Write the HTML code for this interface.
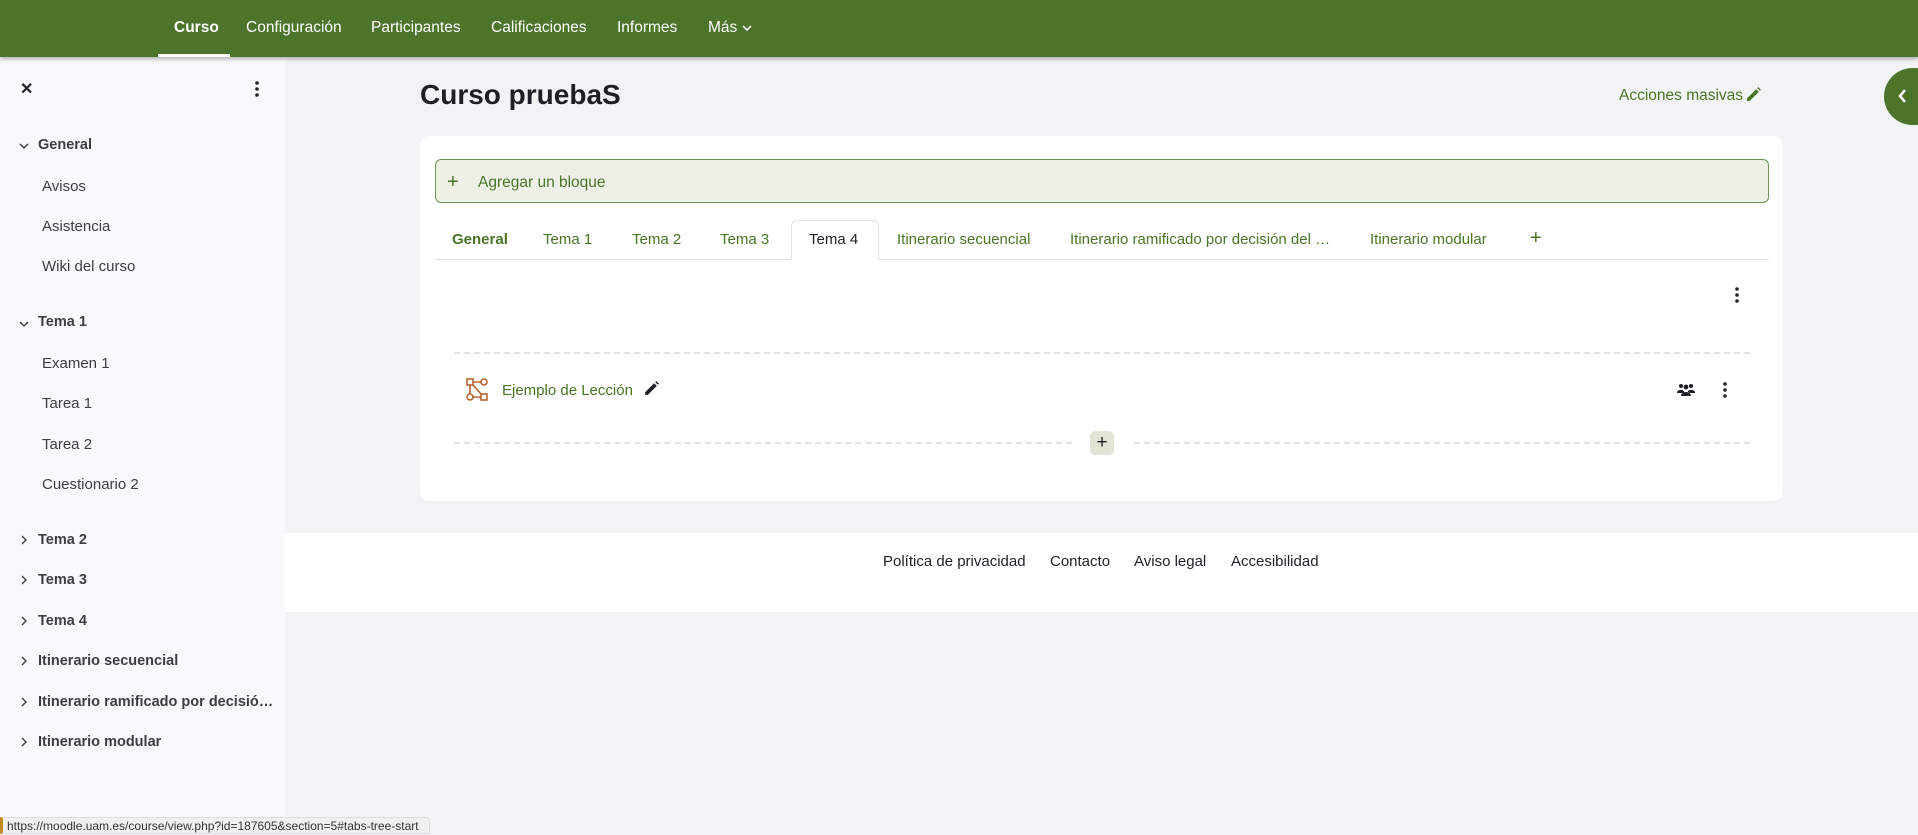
<!DOCTYPE html>
<html><head><meta charset="utf-8"><style>
*{box-sizing:border-box;margin:0;padding:0}
body{width:1918px;height:834px;overflow:hidden;background:#f2f3f5;font-family:"Liberation Sans",sans-serif;position:relative;color:#1d2125}
.a{position:absolute;white-space:nowrap}
.nav{position:absolute;left:0;top:0;width:1918px;height:57px;background:#4c742b;box-shadow:0 2px 4px rgba(0,0,0,.3);z-index:2}
.nav span{position:absolute;top:19px;color:#fff;font-size:15.5px}
.side{position:absolute;left:0;top:57px;width:285px;height:777px;background:#f8f9fa}
.side .s{position:absolute;left:38px;font-size:14.5px;font-weight:bold;color:#3a3f44}
.side .i{position:absolute;left:42px;font-size:15px;color:#3a3f44}
.g{color:#4a7426}
.tab{position:absolute;top:231px;font-size:15px;color:#4a7426}
.dash{position:absolute;height:0;border-top:2px dashed #dee2e6}
.ft{position:absolute;top:553px;font-size:15px;color:#1d2125}
</style></head><body>
<div class="nav">
<span style="left:174px;font-weight:bold">Curso</span>
<span style="left:246px">Configuración</span>
<span style="left:371px">Participantes</span>
<span style="left:491px">Calificaciones</span>
<span style="left:617px">Informes</span>
<span style="left:708px">Más <svg width="10" height="8" viewBox="0 0 10 8"><path d="M1 2l4 4 4-4" stroke="#fff" stroke-width="1.6" fill="none"/></svg></span>
<div style="position:absolute;left:158px;top:54px;width:72px;height:3px;background:#fff"></div>
</div>
<div class="side">
<div class="a" style="left:20px;top:22px;font-size:16px;font-weight:bold">✕</div>
<svg class="a" style="left:254px;top:24px" width="6" height="16"><circle cx="3" cy="2" r="1.8" fill="#222"/><circle cx="3" cy="8" r="1.8" fill="#222"/><circle cx="3" cy="14" r="1.8" fill="#222"/></svg>
<svg class="a" style="left:19px;top:85px" width="10" height="8"><path d="M1 2l4 4 4-4" stroke="#3a3f44" stroke-width="1.4" fill="none"/></svg>
<div class="s" style="top:80px">General</div>
<div class="i" style="top:121px">Avisos</div>
<div class="i" style="top:161px">Asistencia</div>
<div class="i" style="top:201px">Wiki del curso</div>
<svg class="a" style="left:19px;top:263px" width="10" height="8"><path d="M1 2l4 4 4-4" stroke="#3a3f44" stroke-width="1.4" fill="none"/></svg>
<div class="s" style="top:257px">Tema 1</div>
<div class="i" style="top:298px">Examen 1</div>
<div class="i" style="top:338px">Tarea 1</div>
<div class="i" style="top:379px">Tarea 2</div>
<div class="i" style="top:419px">Cuestionario 2</div>
<svg class="a" style="left:20px;top:478px" width="8" height="10"><path d="M2 1l4 4-4 4" stroke="#3a3f44" stroke-width="1.4" fill="none"/></svg>
<div class="s" style="top:475px">Tema 2</div>
<svg class="a" style="left:20px;top:518px" width="8" height="10"><path d="M2 1l4 4-4 4" stroke="#3a3f44" stroke-width="1.4" fill="none"/></svg>
<div class="s" style="top:515px">Tema 3</div>
<svg class="a" style="left:20px;top:559px" width="8" height="10"><path d="M2 1l4 4-4 4" stroke="#3a3f44" stroke-width="1.4" fill="none"/></svg>
<div class="s" style="top:556px">Tema 4</div>
<svg class="a" style="left:20px;top:599px" width="8" height="10"><path d="M2 1l4 4-4 4" stroke="#3a3f44" stroke-width="1.4" fill="none"/></svg>
<div class="s" style="top:596px">Itinerario secuencial</div>
<svg class="a" style="left:20px;top:640px" width="8" height="10"><path d="M2 1l4 4-4 4" stroke="#3a3f44" stroke-width="1.4" fill="none"/></svg>
<div class="s" style="top:637px">Itinerario ramificado por decisió…</div>
<svg class="a" style="left:20px;top:680px" width="8" height="10"><path d="M2 1l4 4-4 4" stroke="#3a3f44" stroke-width="1.4" fill="none"/></svg>
<div class="s" style="top:677px">Itinerario modular</div>
</div>
<div class="a" style="left:420px;top:79px;font-size:28px;font-weight:bold">Curso pruebaS</div>
<div class="a g" style="left:1619px;top:87px;font-size:15.5px">Acciones masivas</div>
<svg class="a" style="left:1745px;top:86px" width="17" height="17" viewBox="0 0 16 16"><path d="M2 11.5L10.5 3l2.5 2.5L4.5 14H2z M11.5 2l1-1 2.5 2.5-1 1z" fill="#4a7426"/></svg>
<div class="a" style="left:1884px;top:68px;width:60px;height:57px;border-radius:29px;background:#4c742b"></div>
<svg class="a" style="left:1897px;top:88px" width="10" height="16"><path d="M8 2L3 8l5 6" stroke="#fff" stroke-width="2.4" fill="none"/></svg>
<div class="a" style="left:420px;top:136px;width:1363px;height:365px;background:#fff;border-radius:10px"></div>
<div class="a" style="left:435px;top:159px;width:1334px;height:44px;background:#eef0e8;border:1px solid #6f9152;border-radius:6px"></div>
<div class="a g" style="left:447px;top:171px;font-size:20px">+</div>
<div class="a g" style="left:478px;top:174px;font-size:15.5px">Agregar un bloque</div>
<div class="a" style="left:435px;top:259px;width:1334px;height:1px;background:#dee2e6"></div>
<div class="a" style="left:791px;top:220px;width:88px;height:40px;background:#fff;border:1px solid #dee2e6;border-bottom:none;border-radius:6px 6px 0 0"></div>
<div class="tab" style="left:452px;font-weight:bold">General</div>
<div class="tab" style="left:543px">Tema 1</div>
<div class="tab" style="left:632px">Tema 2</div>
<div class="tab" style="left:720px">Tema 3</div>
<div class="tab" style="left:809px;color:#1d2125">Tema 4</div>
<div class="tab" style="left:897px">Itinerario secuencial</div>
<div class="tab" style="left:1070px">Itinerario ramificado por decisión del …</div>
<div class="tab" style="left:1370px">Itinerario modular</div>
<div class="tab" style="left:1530px;top:227px;font-size:20px">+</div>
<svg class="a" style="left:1734px;top:287px" width="6" height="16"><circle cx="3" cy="2" r="1.8" fill="#222"/><circle cx="3" cy="8" r="1.8" fill="#222"/><circle cx="3" cy="14" r="1.8" fill="#222"/></svg>
<div class="dash" style="left:454px;top:352px;width:1296px"></div>
<svg class="a" style="left:466px;top:378px" width="23" height="23" viewBox="0 0 23 23" fill="none" stroke="#b5652f" stroke-width="1.6"><rect x="1" y="1" width="6" height="6"/><circle cx="18" cy="4" r="3"/><circle cx="4" cy="19" r="3"/><rect x="15" y="16" width="6" height="6"/><path d="M7 4h8M4 7v9M7 19h8M7 7l8 9"/></svg>
<div class="a g" style="left:502px;top:382px;font-size:15px">Ejemplo de Lección</div>
<svg class="a" style="left:643px;top:380px" width="17" height="17" viewBox="0 0 16 16"><path d="M2 11.5L10.5 3l2.5 2.5L4.5 14H2z M11.5 2l1-1 2.5 2.5-1 1z" fill="#1d2125"/></svg>
<svg class="a" style="left:1677px;top:383px" width="18" height="13" viewBox="0 0 18 13" fill="#1d2125"><circle cx="4" cy="3" r="2"/><circle cx="14" cy="3" r="2"/><circle cx="9" cy="4" r="2.4"/><path d="M0 9a4 3 0 0 1 7-1v2H0z M18 9a4 3 0 0 0-7-1v2h7z M4 13a5 4 0 0 1 10 0z"/></svg>
<svg class="a" style="left:1722px;top:382px" width="6" height="16"><circle cx="3" cy="2" r="1.8" fill="#222"/><circle cx="3" cy="8" r="1.8" fill="#222"/><circle cx="3" cy="14" r="1.8" fill="#222"/></svg>
<div class="dash" style="left:454px;top:442px;width:618px"></div>
<div class="dash" style="left:1134px;top:442px;width:616px"></div>
<div class="a" style="left:1090px;top:431px;width:24px;height:24px;border-radius:5px;background:#e0e5d8;text-align:center;font-size:19px;line-height:23px;color:#1d2125">+</div>
<div class="a" style="left:285px;top:533px;width:1633px;height:79px;background:#fff"></div>
<div class="ft" style="left:883px">Política de privacidad</div>
<div class="ft" style="left:1050px">Contacto</div>
<div class="ft" style="left:1134px">Aviso legal</div>
<div class="ft" style="left:1231px">Accesibilidad</div>
<div class="a" style="left:0;top:817px;width:430px;height:17px;background:#f0f0f0;border:1px solid #ddd;border-radius:0 4px 0 0;font-size:12px;color:#333;padding-left:4px;line-height:17px;border-left:3px solid #c88a1c">https://moodle.uam.es/course/view.php?id=187605&amp;section=5#tabs-tree-start</div>
</body></html>
